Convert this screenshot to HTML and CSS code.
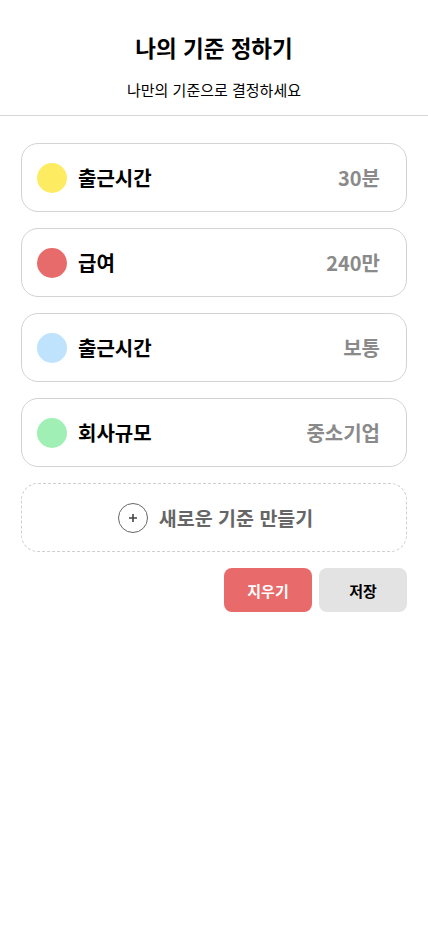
FILE: index.html
```html
<!DOCTYPE html>
<html lang="ko">
<head>
<meta charset="utf-8">
<link rel="stylesheet" href="styles.css">
</head>
<body>
<header class="header">
  <h1 class="title">나의 기준 정하기</h1>
  <p class="subtitle">나만의 기준으로 결정하세요</p>
</header>
<main class="content">
  <div class="card">
    <span class="dot dot-yellow"></span>
    <span class="label">출근시간</span>
    <span class="value">30분</span>
  </div>
  <div class="card">
    <span class="dot dot-red"></span>
    <span class="label">급여</span>
    <span class="value">240만</span>
  </div>
  <div class="card">
    <span class="dot dot-blue"></span>
    <span class="label">출근시간</span>
    <span class="value">보통</span>
  </div>
  <div class="card">
    <span class="dot dot-green"></span>
    <span class="label">회사규모</span>
    <span class="value">중소기업</span>
  </div>
  <button class="add-card">
    <svg class="plus" width="30" height="30" viewBox="0 0 30 30">
      <circle cx="15" cy="15" r="14.5" fill="none" stroke="#666" stroke-width="1"/>
      <path d="M15 11v8M11 15h8" stroke="#444" stroke-width="1.6"/>
    </svg>
    <span>새로운 기준 만들기</span>
  </button>
  <div class="actions">
    <button class="btn btn-clear">지우기</button>
    <button class="btn btn-save">저장</button>
  </div>
</main>
</body>
</html>
```
FILE: styles.css
```css
* { box-sizing: border-box; }
body {
  margin: 0;
  font-family: "Noto Sans CJK KR", "Noto Sans", sans-serif;
  background: #fff;
  color: #000;
}
.header {
  border-bottom: 1px solid #d6d6d6;
  text-align: center;
  padding-top: 30px;
  height: 116px;
}
.title {
  margin: 0;
  font-size: 22.5px;
  font-weight: 700;
  line-height: 34px;
}
.subtitle {
  margin: 15px 0 0;
  font-size: 15px;
  line-height: 22px;
}
.content {
  padding: 27px 21px 0;
  display: flex;
  flex-direction: column;
  gap: 16px;
}
.card {
  height: 69px;
  border: 1px solid #d3d3d3;
  border-radius: 17px;
  display: flex;
  align-items: center;
  padding: 0 26px 0 15px;
}
.dot {
  width: 30px;
  height: 30px;
  border-radius: 50%;
  flex: none;
}
.dot-yellow { background: #fdec62; }
.dot-red { background: #e86b6b; }
.dot-blue { background: #bfe3fd; }
.dot-green { background: #a0f0b6; }
.label {
  margin-left: 11px;
  font-size: 20px;
  font-weight: 700;
  flex: 1;
}
.value {
  font-size: 20px;
  font-weight: 700;
  color: #8a8a8a;
}
.add-card {
  height: 69px;
  border: 1px dashed #cfcfcf;
  border-radius: 17px;
  background: #fff;
  display: flex;
  align-items: center;
  justify-content: center;
  gap: 11px;
  font-family: inherit;
  font-size: 19.5px;
  font-weight: 700;
  color: #666;
  padding: 0 0 0 3px;
}
.actions {
  display: flex;
  justify-content: flex-end;
  gap: 7px;
}
.btn {
  width: 88px;
  height: 44px;
  border: none;
  border-radius: 8px;
  font-family: inherit;
  font-size: 15px;
  font-weight: 700;
}
.btn-clear { background: #e86a6a; color: #fff; }
.btn-save { background: #e3e3e3; color: #000; }
```
